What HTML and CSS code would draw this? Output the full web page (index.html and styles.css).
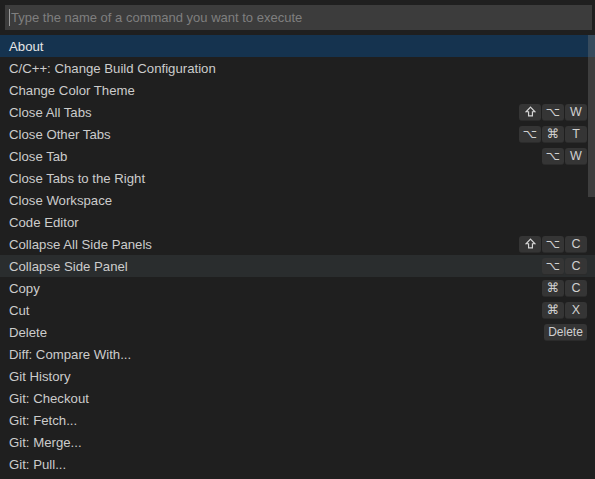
FILE: index.html
```html
<!DOCTYPE html>
<html>
<head>
<meta charset="utf-8">
<link rel="stylesheet" href="styles.css">
</head>
<body>
<div class="palette">
  <div class="input-wrap">
    <div class="input"><span class="caret"></span><span class="placeholder">Type the name of a command you want to execute</span></div>
  </div>
  <div class="list">
    <div class="row selected"><span class="label">About</span></div>
    <div class="row"><span class="label">C/C++: Change Build Configuration</span></div>
    <div class="row"><span class="label">Change Color Theme</span></div>
    <div class="row"><span class="label">Close All Tabs</span><span class="keys"><kbd><svg class="shift" viewBox="0 0 12 12"><path d="M6 1.3 L10.8 6.3 H8.1 V10.7 H3.9 V6.3 H1.2 Z"/></svg></kbd><kbd>⌥</kbd><kbd>W</kbd></span></div>
    <div class="row"><span class="label">Close Other Tabs</span><span class="keys"><kbd>⌥</kbd><kbd>⌘</kbd><kbd>T</kbd></span></div>
    <div class="row"><span class="label">Close Tab</span><span class="keys"><kbd>⌥</kbd><kbd>W</kbd></span></div>
    <div class="row"><span class="label">Close Tabs to the Right</span></div>
    <div class="row"><span class="label">Close Workspace</span></div>
    <div class="row"><span class="label">Code Editor</span></div>
    <div class="row"><span class="label">Collapse All Side Panels</span><span class="keys"><kbd><svg class="shift" viewBox="0 0 12 12"><path d="M6 1.3 L10.8 6.3 H8.1 V10.7 H3.9 V6.3 H1.2 Z"/></svg></kbd><kbd>⌥</kbd><kbd>C</kbd></span></div>
    <div class="row hover"><span class="label">Collapse Side Panel</span><span class="keys"><kbd>⌥</kbd><kbd>C</kbd></span></div>
    <div class="row"><span class="label">Copy</span><span class="keys"><kbd>⌘</kbd><kbd>C</kbd></span></div>
    <div class="row"><span class="label">Cut</span><span class="keys"><kbd>⌘</kbd><kbd>X</kbd></span></div>
    <div class="row"><span class="label">Delete</span><span class="keys"><kbd class="wide">Delete</kbd></span></div>
    <div class="row"><span class="label">Diff: Compare With...</span></div>
    <div class="row"><span class="label">Git History</span></div>
    <div class="row"><span class="label">Git: Checkout</span></div>
    <div class="row"><span class="label">Git: Fetch...</span></div>
    <div class="row"><span class="label">Git: Merge...</span></div>
    <div class="row"><span class="label">Git: Pull...</span></div>
    <div class="scrollbar"></div>
  </div>
</div>
</body>
</html>
```
FILE: styles.css
```css
html, body {
  margin: 0;
  padding: 0;
  background: #1f1f1f;
  width: 595px;
  height: 479px;
  overflow: hidden;
}
.palette {
  font-family: "Liberation Sans", Arial, sans-serif;
  font-size: 13.2px;
  color: #cccccc;
}
.input-wrap {
  padding: 5px 3px 5px 5px;
}
.input {
  height: 25px;
  background: #3c3c3c;
  display: flex;
  align-items: center;
  padding-left: 4px;
}
.caret {
  width: 1px;
  height: 17px;
  background: #9a9a9a;
  margin-right: 1px;
}
.placeholder {
  color: #7f7f7f;
  font-size: 13px;
}
.list {
  position: relative;
}
.row {
  height: 22px;
  display: flex;
  align-items: center;
  justify-content: space-between;
  padding: 0 8px 0 9px;
}
.row.selected {
  background: #15334f;
  color: #e6e6e6;
}
.row.hover {
  background: #2a2d2e;
}
.keys {
  display: flex;
  gap: 1px;
}
kbd {
  font-family: "Liberation Sans", "DejaVu Sans", sans-serif;
  font-size: 12.5px;
  color: #d0d0d0;
  background: #353535;
  border-radius: 3px;
  min-width: 22px;
  height: 17px;
  display: flex;
  align-items: center;
  justify-content: center;
  box-sizing: border-box;
  border-bottom: 1px solid #2b2b2b;
}
kbd.wide {
  padding: 0 4px;
  min-width: 43px;
  font-size: 12px;
}
.shift {
  width: 11px;
  height: 11px;
  fill: none;
  stroke: #d6d6d6;
  stroke-width: 1.3;
  stroke-linejoin: miter;
}
.scrollbar {
  position: absolute;
  top: 0;
  right: 0;
  width: 7px;
  height: 162px;
  background: rgba(121, 121, 121, 0.35);
}
```
